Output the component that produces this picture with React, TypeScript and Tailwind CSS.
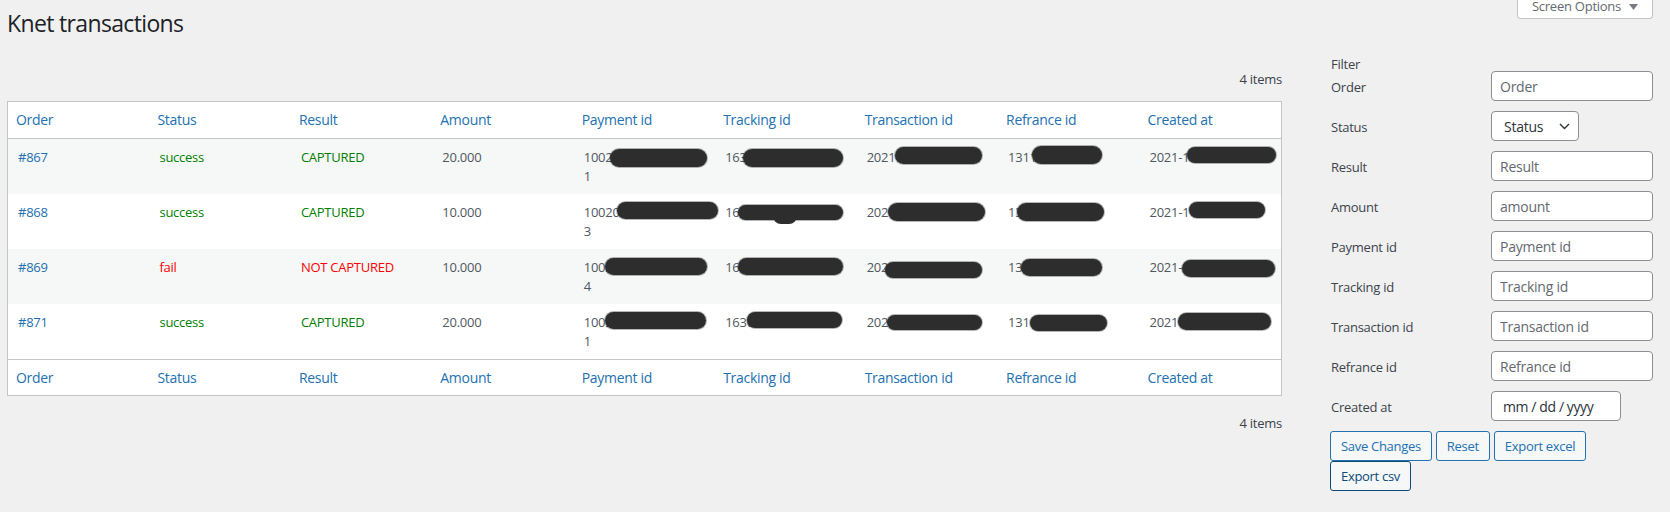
import React from "react";

type Pill = [number, number, number, number];

interface Row {
  order: string;
  status: string;
  result: string;
  amount: string;
  ok: boolean;
  pay: [string, string];
  track: string;
  trans: string;
  refr: string;
  created: string;
  pills: [Pill, Pill, Pill, Pill, Pill];
  droop?: boolean;
}

const rows: Row[] = [
  {
    order: "#867",
    status: "success",
    result: "CAPTURED",
    amount: "20.000",
    ok: true,
    pay: ["1002", "1"],
    track: "163",
    trans: "2021",
    refr: "1311",
    created: "2021-1",
    pills: [
      [36, 10, 97, 18],
      [28, 10, 100, 18],
      [38, 8, 87, 17],
      [34, 7, 70, 18],
      [47, 8, 89, 16],
    ],
  },
  {
    order: "#868",
    status: "success",
    result: "CAPTURED",
    amount: "10.000",
    ok: true,
    pay: ["10020", "3"],
    track: "16",
    trans: "2021",
    refr: "13",
    created: "2021-1",
    pills: [
      [43, 8, 101, 17],
      [23, 11, 105, 15],
      [31, 9, 97, 18],
      [19, 9, 87, 18],
      [49, 8, 76, 16],
    ],
    droop: true,
  },
  {
    order: "#869",
    status: "fail",
    result: "NOT CAPTURED",
    amount: "10.000",
    ok: false,
    pay: ["1002", "4"],
    track: "16",
    trans: "2021",
    refr: "13",
    created: "2021-",
    pills: [
      [31, 9, 102, 17],
      [23, 9, 105, 17],
      [28, 13, 97, 16],
      [23, 10, 81, 17],
      [42, 11, 93, 17],
    ],
  },
  {
    order: "#871",
    status: "success",
    result: "CAPTURED",
    amount: "20.000",
    ok: true,
    pay: ["1002", "1"],
    track: "1636",
    trans: "2021",
    refr: "1311",
    created: "2021-1",
    pills: [
      [31, 8, 101, 17],
      [32, 8, 95, 16],
      [30, 11, 95, 15],
      [32, 11, 77, 16],
      [38, 9, 93, 17],
    ],
  },
];

const headers = [
  "Order",
  "Status",
  "Result",
  "Amount",
  "Payment id",
  "Tracking id",
  "Transaction id",
  "Refrance id",
  "Created at",
];

const filters = [
  "Order",
  "Status",
  "Result",
  "Amount",
  "Payment id",
  "Tracking id",
  "Transaction id",
  "Refrance id",
  "Created at",
];

const placeholders: Record<string, string> = {
  Order: "Order",
  Result: "Result",
  Amount: "amount",
  "Payment id": "Payment id",
  "Tracking id": "Tracking id",
  "Transaction id": "Transaction id",
  "Refrance id": "Refrance id",
};

function Redact({ p }: { p: Pill }) {
  return (
    <span
      className="absolute rounded-full bg-[#2d2d2d] shadow-[0_0_0_1px_rgba(45,45,45,0.35)]"
      style={{ left: p[0], top: p[1], width: p[2], height: p[3] }}
    />
  );
}

function HeaderRow({ top }: { top: boolean }) {
  return (
    <tr>
      {headers.map((h) => (
        <th
          key={h}
          className={`text-left font-normal text-[14px] leading-[19.6px] tracking-[-0.3px] text-[#2271b1] px-[8px] py-[8px] ${
            top ? "border-b" : "border-t"
          } border-[#c3c4c7]`}
        >
          {h}
        </th>
      ))}
    </tr>
  );
}

const td = "align-top px-[10px] pt-[9px] pb-[7px] text-[13px] leading-[19.5px]";

export default function App() {
  const font = { fontFamily: '"Open Sans", "Noto Sans", Arial, sans-serif' };
  return (
    <div
      className="min-h-[512px] w-[1670px] bg-[#f0f0f1] flex items-start pl-[7px] pr-[17px] gap-[48px] text-[#3c434a] tracking-[-0.25px]"
      style={font}
    >
      {/* Left column */}
      <div className="w-[1275px] shrink-0 flex flex-col">
        <h1 className="mt-[8px] text-[23px] leading-[30px] font-normal text-[#1d2327] tracking-[-0.65px]">
          Knet transactions
        </h1>
        <div className="mt-[31px] text-right text-[13px] leading-[20px] text-[#3c434a]">
          4 items
        </div>
        <div className="mt-[12px] border border-[#c3c4c7] bg-white">
          <table className="w-full table-fixed border-collapse">
            <thead>
              <HeaderRow top={true} />
            </thead>
            <tbody>
              {rows.map((r, i) => (
                <tr key={r.order} className={i % 2 === 0 ? "bg-[#f6f7f7]" : "bg-white"}>
                  <td className={`${td} text-[#2271b1]`}>{r.order}</td>
                  <td className={`${td} ${r.ok ? "text-[#008000]" : "text-[#ff0000]"}`}>{r.status}</td>
                  <td className={`${td} ${r.ok ? "text-[#008000]" : "text-[#ff0000]"}`}>{r.result}</td>
                  <td className={`${td} text-[#50575e]`}>{r.amount}</td>
                  <td className={`${td} relative text-[#50575e]`}>
                    <div>{r.pay[0]}</div>
                    <div>{r.pay[1]}</div>
                    <Redact p={r.pills[0]} />
                  </td>
                  <td className={`${td} relative text-[#50575e]`}>
                    {r.track}
                    <Redact p={r.pills[1]} />
                    {r.droop && (
                      <span className="absolute left-[58px] top-[14px] w-[24px] h-[16px] rounded-full bg-[#2d2d2d]" />
                    )}
                  </td>
                  <td className={`${td} relative text-[#50575e]`}>
                    {r.trans}
                    <Redact p={r.pills[2]} />
                  </td>
                  <td className={`${td} relative text-[#50575e]`}>
                    {r.refr}
                    <Redact p={r.pills[3]} />
                  </td>
                  <td className={`${td} relative text-[#50575e]`}>
                    {r.created}
                    <Redact p={r.pills[4]} />
                  </td>
                </tr>
              ))}
            </tbody>
            <tfoot>
              <HeaderRow top={false} />
            </tfoot>
          </table>
        </div>
        <div className="mt-[17px] text-right text-[13px] leading-[20px] text-[#3c434a]">
          4 items
        </div>
      </div>

      {/* Right column */}
      <div className="w-[323px] shrink-0 flex flex-col">
        <div className="flex justify-end h-[19px]">
          <div className="-mt-[5px] h-[24px] w-[136px] flex items-center justify-center gap-[8px] bg-white border border-[#c3c4c7] border-t-0 rounded-b-[4px] text-[13px] text-[#646970]">
            <span>Screen Options</span>
            <svg width="9" height="6" viewBox="0 0 9 6">
              <polygon points="0,0 9,0 4.5,6" fill="#787c82" />
            </svg>
          </div>
        </div>
        <div className="mt-[35px] h-[17px] pl-[1px] text-[13px] leading-[20px] text-[#3c434a]">
          Filter
        </div>
        <div className="flex flex-col gap-[10px]">
          {filters.map((f) => (
            <div key={f} className="flex items-center h-[30px]">
              <div className="w-[161px] pl-[1px] pt-[4px] text-[13px] text-[#3c434a]">{f}</div>
              {f === "Status" ? (
                <div className="w-[88px] h-[30px] bg-white border border-[#8c8f94] rounded-[4px] flex items-center pl-[12px] pr-[8px] justify-between text-[14px] text-[#2c3338]">
                  <span>Status</span>
                  <svg width="11" height="7" viewBox="0 0 11 7" fill="none">
                    <polyline points="1,1 5.5,5.5 10,1" stroke="#2c3338" strokeWidth="1.4" />
                  </svg>
                </div>
              ) : f === "Created at" ? (
                <div className="w-[130px] h-[30px] bg-white border border-[#8c8f94] rounded-[4px] flex items-center pl-[11px] text-[14px] text-[#2c3338] tracking-[-0.4px]">
                  mm / dd / yyyy
                </div>
              ) : (
                <input
                  readOnly
                  placeholder={placeholders[f]}
                  className="w-[162px] h-[30px] bg-white border border-[#8c8f94] rounded-[4px] px-[8px] text-[14px] tracking-[-0.25px] text-[#2c3338] placeholder:text-[#646970] outline-none"
                  style={font}
                />
              )}
            </div>
          ))}
        </div>
        <div className="mt-[10px] flex flex-wrap gap-x-[4px] gap-y-0">
          <button className="h-[30px] px-[10px] border border-[#2271b1] bg-[#f6f7f7] text-[#2271b1] rounded-[3px] text-[13px] leading-[28px] tracking-[-0.3px]">
            Save Changes
          </button>
          <button className="h-[30px] px-[10px] border border-[#2271b1] bg-[#f6f7f7] text-[#2271b1] rounded-[3px] text-[13px] leading-[28px] tracking-[-0.3px]">
            Reset
          </button>
          <button className="h-[30px] px-[10px] border border-[#2271b1] bg-[#f6f7f7] text-[#2271b1] rounded-[3px] text-[13px] leading-[28px] tracking-[-0.3px]">
            Export excel
          </button>
          <button className="h-[30px] px-[10px] border border-[#0a4b78] bg-[#f6f7f7] text-[#0a4b78] rounded-[3px] text-[13px] leading-[28px] tracking-[-0.3px]">
            Export csv
          </button>
        </div>
      </div>
    </div>
  );
}
